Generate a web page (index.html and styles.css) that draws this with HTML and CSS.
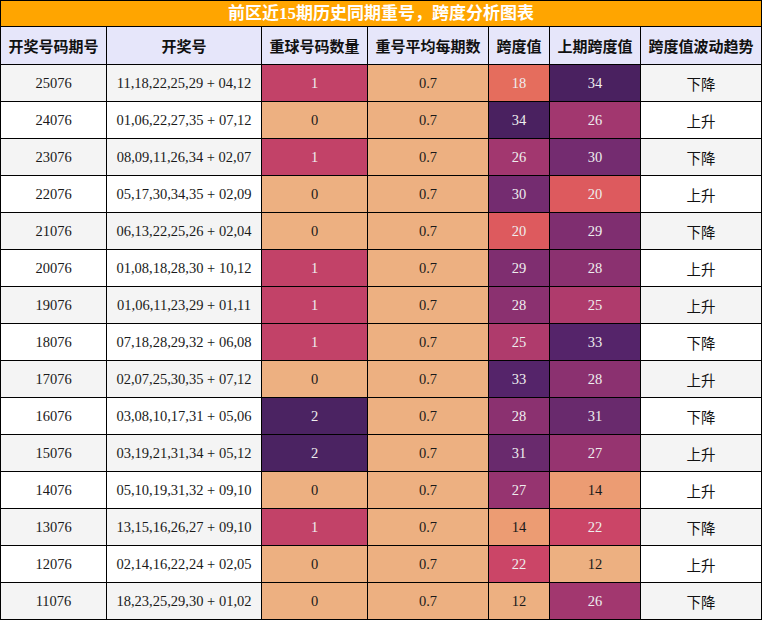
FILE: index.html
```html
<!DOCTYPE html>
<html lang="zh">
<head>
<meta charset="utf-8">
<title>前区近15期历史同期重号，跨度分析图表</title>
<link rel="stylesheet" href="styles.css">
</head>
<body>
<div class="sheet">
  <div class="title">前区近15期历史同期重号，跨度分析图表</div>
  <div class="grid">
    <div class="h">开奖号码期号</div><div class="h">开奖号</div><div class="h">重球号码数量</div><div class="h">重号平均每期数</div><div class="h">跨度值</div><div class="h">上期跨度值</div><div class="h">跨度值波动趋势</div>

    <div class="c g">25076</div><div class="c g">11,18,22,25,29 + 04,12</div><div class="c n1">1</div><div class="c p">0.7</div><div class="c s18">18</div><div class="c s34">34</div><div class="c t g">下降</div>
    <div class="c">24076</div><div class="c">01,06,22,27,35 + 07,12</div><div class="c p">0</div><div class="c p">0.7</div><div class="c s34">34</div><div class="c s26">26</div><div class="c t">上升</div>
    <div class="c g">23076</div><div class="c g">08,09,11,26,34 + 02,07</div><div class="c n1">1</div><div class="c p">0.7</div><div class="c s26">26</div><div class="c s30">30</div><div class="c t g">下降</div>
    <div class="c">22076</div><div class="c">05,17,30,34,35 + 02,09</div><div class="c p">0</div><div class="c p">0.7</div><div class="c s30">30</div><div class="c s20">20</div><div class="c t">上升</div>
    <div class="c g">21076</div><div class="c g">06,13,22,25,26 + 02,04</div><div class="c p">0</div><div class="c p">0.7</div><div class="c s20">20</div><div class="c s29">29</div><div class="c t g">下降</div>
    <div class="c">20076</div><div class="c">01,08,18,28,30 + 10,12</div><div class="c n1">1</div><div class="c p">0.7</div><div class="c s29">29</div><div class="c s28">28</div><div class="c t">上升</div>
    <div class="c g">19076</div><div class="c g">01,06,11,23,29 + 01,11</div><div class="c n1">1</div><div class="c p">0.7</div><div class="c s28">28</div><div class="c s25">25</div><div class="c t g">上升</div>
    <div class="c">18076</div><div class="c">07,18,28,29,32 + 06,08</div><div class="c n1">1</div><div class="c p">0.7</div><div class="c s25">25</div><div class="c s33">33</div><div class="c t">下降</div>
    <div class="c g">17076</div><div class="c g">02,07,25,30,35 + 07,12</div><div class="c p">0</div><div class="c p">0.7</div><div class="c s33">33</div><div class="c s28">28</div><div class="c t g">上升</div>
    <div class="c">16076</div><div class="c">03,08,10,17,31 + 05,06</div><div class="c n2">2</div><div class="c p">0.7</div><div class="c s28">28</div><div class="c s31">31</div><div class="c t">下降</div>
    <div class="c g">15076</div><div class="c g">03,19,21,31,34 + 05,12</div><div class="c n2">2</div><div class="c p">0.7</div><div class="c s31">31</div><div class="c s27">27</div><div class="c t g">上升</div>
    <div class="c">14076</div><div class="c">05,10,19,31,32 + 09,10</div><div class="c p">0</div><div class="c p">0.7</div><div class="c s27">27</div><div class="c s14">14</div><div class="c t">上升</div>
    <div class="c g">13076</div><div class="c g">13,15,16,26,27 + 09,10</div><div class="c n1">1</div><div class="c p">0.7</div><div class="c s14">14</div><div class="c s22">22</div><div class="c t g">下降</div>
    <div class="c">12076</div><div class="c">02,14,16,22,24 + 02,05</div><div class="c p">0</div><div class="c p">0.7</div><div class="c s22">22</div><div class="c s12">12</div><div class="c t">上升</div>
    <div class="c g">11076</div><div class="c g">18,23,25,29,30 + 01,02</div><div class="c p">0</div><div class="c p">0.7</div><div class="c s12">12</div><div class="c s26">26</div><div class="c t g">下降</div>
  </div>
</div>
</body>
</html>
```
FILE: styles.css
```css
* { box-sizing: border-box; }
html, body { margin: 0; padding: 0; background: #fff; }
body {
  font-family: "Liberation Serif", "Noto Sans CJK SC", serif;
  width: 762px;
}
.sheet {
  width: 762px;
  background: #000;
  padding: 1px;
}
.title {
  height: 25px;
  background: #FFA500;
  color: #fff;
  font-weight: bold;
  font-size: 17px;
  line-height: 25px;
  text-align: center;
  margin-bottom: 1px;
}
.grid {
  display: grid;
  grid-template-columns: 105px 154px 105px 120px 60px 90px 120px;
  grid-template-rows: 37px repeat(15, 36px);
  gap: 1px;
  background: #000;
}
.grid > div {
  display: flex;
  align-items: center;
  justify-content: center;
  background: #fff;
  color: #1a1a1a;
  font-size: 14.5px;
  white-space: nowrap;
}
.grid > .h {
  background: #E6E6FA;
  font-family: "Noto Sans CJK SC", sans-serif;
  font-weight: bold;
  font-size: 15px;
  color: #111;
}
.grid > .g { background: #F4F4F4; }
.grid > .t {
  font-family: "Noto Sans CJK SC", sans-serif;
  font-size: 14.5px;
  color: #111;
}
.grid > .p { background: #EDB081; color: #1a1a1a; }
.grid > .n1 { background: #C24268; color: #EEE; }
.grid > .n2 { background: #4B2362; color: #EEE; }
.grid > .s12 { background: #EDB081; color: #1a1a1a; }
.grid > .s14 { background: #EC9C73; color: #1a1a1a; }
.grid > .s18 { background: #E56D5D; color: #EEE; }
.grid > .s20 { background: #DD5A5E; color: #EEE; }
.grid > .s22 { background: #CB4567; color: #EEE; }
.grid > .s25 { background: #AF3B6C; color: #EEE; }
.grid > .s26 { background: #A2376F; color: #EEE; }
.grid > .s27 { background: #963470; color: #EEE; }
.grid > .s28 { background: #8B3170; color: #EEE; }
.grid > .s29 { background: #7F2E70; color: #EEE; }
.grid > .s30 { background: #742C70; color: #EEE; }
.grid > .s31 { background: #692A6D; color: #EEE; }
.grid > .s33 { background: #55246A; color: #EEE; }
.grid > .s34 { background: #4A2160; color: #EEE; }
```
